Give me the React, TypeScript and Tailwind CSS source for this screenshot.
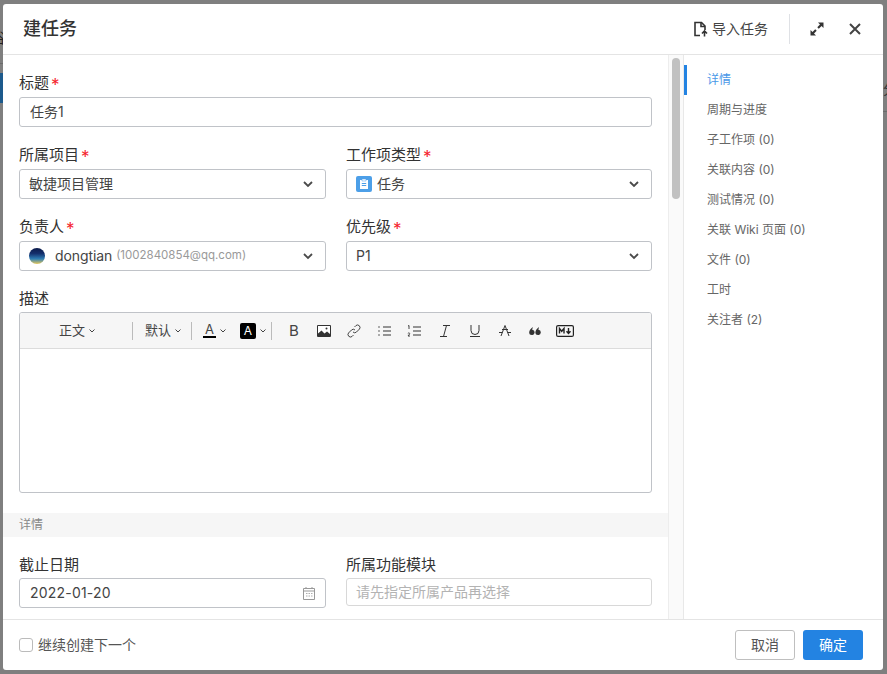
import React from "react";

const font = { fontFamily: 'Inter, "Noto Sans CJK SC", sans-serif' };

function Chevron({ className = "" }: { className?: string }) {
  return (
    <svg viewBox="0 0 10 7" className={"h-[7px] w-[10px] " + className} fill="none" stroke="#4a4a4a" strokeWidth="1.8">
      <path d="M1 1l4 4 4-4" />
    </svg>
  );
}

function Mini() {
  return (
    <svg viewBox="0 0 6 4" className="ml-1 h-1 w-[6px]" fill="none" stroke="#444" strokeWidth="1">
      <path d="M.5.5L3 3 5.500.5" />
    </svg>
  );
}

function Label({ text, req }: { text: string; req?: boolean }) {
  return (
    <div className="flex h-[18px] items-center text-[15px] leading-[18px] text-[#333]">
      {text}
      {req && <span className="ml-[2px] mt-[3px] text-[17px] leading-[18px] text-[#f5222d]">*</span>}
    </div>
  );
}

function Select({ children }: { children: React.ReactNode }) {
  return (
    <div className="mt-[5px] flex h-[30px] items-center justify-between rounded-[3px] border border-[#c0c3c8] bg-white pr-[12px] text-[14px] text-[#444]">
      <div className="flex min-w-0 items-center">{children}</div>
      <Chevron />
    </div>
  );
}

const nav = ["周期与进度", "子工作项 (0)", "关联内容 (0)", "测试情况 (0)", "关联 Wiki 页面 (0)", "文件 (0)", "工时", "关注者 (2)"];

export default function App() {
  return (
    <div className="relative flex h-[674px] w-[887px] overflow-hidden bg-[#7f7f7f] pl-[3px] pt-1" style={font}>
      <div className="absolute left-0 top-[73px] h-[30px] w-[3px] bg-[#1d5a8c]" />
      <div className="absolute left-[-8px] top-[29px] text-[14px] leading-[18px] text-[#222]">谷</div>
      <div className="absolute left-[883px] top-[80px] text-[14px] leading-[18px] text-[#333]">分</div>
      <div className="absolute left-[883px] top-[111px] h-px w-1 bg-[#6b6b6b]" />
      <div className="absolute left-0 top-[63px] h-px w-[3px] bg-[#6b6b6b]" />

      <div className="relative z-10 flex h-[666px] w-[880px] flex-col overflow-hidden rounded-[3px] bg-white">
        <header className="flex h-[51px] shrink-0 items-center justify-between border-b border-[#e4e4e4] pl-[20px] pr-[22px]">
          <h1 className="text-[18px] font-medium leading-[26px] text-[#333]">建任务</h1>
          <div className="flex items-center">
            <svg viewBox="0 0 16 16" className="h-4 w-4" fill="none" stroke="#333" strokeWidth="1.6">
              <path d="M8 14.500H3V1.500h6.500L13 5v4" />
              <path d="M9 1.500V5.500h4" />
              <path d="M12.500 15.500V10.500M10 12.500l2.500-2.500 2.500 2.500" />
            </svg>
            <span className="mb-[2px] ml-[4px] text-[14px] text-[#444]">导入任务</span>
            <div className="ml-[21px] h-[30px] w-px bg-[#dfe1e5]" />
            <svg viewBox="0 0 14 14" className="ml-[20px] h-[14px] w-[14px]" fill="#333" stroke="none">
              <path d="M8 0.500h5.500V6L11.500 4 8.800 6.700 7.300 5.200 10 2.500zM6 13.500H.5V8L2.500 10l2.700-2.700 1.500 1.500L4 11.500z" />
            </svg>
            <svg viewBox="0 0 12 12" className="ml-[25px] h-3 w-3" fill="none" stroke="#444" strokeWidth="2">
              <path d="M1 1l10 10M11 1L1 11" />
            </svg>
          </div>
        </header>

        <div className="flex min-h-0 flex-1">
          <main className="w-[665px] shrink-0 overflow-hidden pt-[19px]">
            <div className="px-[16px]">
              <Label text="标题" req />
              <div className="mt-[5px] flex h-[30px] items-center rounded-[3px] border border-[#c0c3c8] pb-[2px] pl-[10px] text-[14px] text-[#444]">任务1</div>
              <div className="mt-[19px] grid grid-cols-[307px_306px] gap-x-[20px] gap-y-[19px]">
                <div>
                  <Label text="所属项目" req />
                  <Select><span className="mb-[2px] pl-[9px]">敏捷项目管理</span></Select>
                </div>
                <div>
                  <Label text="工作项类型" req />
                  <Select>
                    <span className="ml-[9px] flex h-4 w-4 items-center justify-center rounded-[2px] bg-[#4c9fe8]">
                      <svg viewBox="0 0 12 12" className="h-3 w-3">
                        <path d="M2 2h8v9H2z" fill="#fff" />
                        <path d="M4 1h4v2H4z" fill="#fff" stroke="#4c9fe8" strokeWidth=".5" />
                        <path d="M3.800 5.500h4.400M3.800 7.500h4.400" stroke="#4c9fe8" />
                      </svg>
                    </span>
                    <span className="mb-[2px] ml-[5px]">任务</span>
                  </Select>
                </div>
                <div>
                  <Label text="负责人" req />
                  <Select>
                    <span className="ml-[9px] h-4 w-4 rounded-full bg-[linear-gradient(180deg,#0c1a4a_0%,#14306e_35%,#2f7fb5_68%,#e8c95a_100%)]" />
                    <span className="mb-[1px] ml-[10px] text-[14px] tracking-[-0.1px] text-[#444]">dongtian</span>
                    <span className="mb-[1px] ml-[4px] text-[11.5px] text-[#999]">(1002840854@qq.com)</span>
                  </Select>
                </div>
                <div>
                  <Label text="优先级" req />
                  <Select><span className="mb-[1px] pl-[9px]">P1</span></Select>
                </div>
              </div>

              <div className="mt-[19px]"><Label text="描述" /></div>
              <div className="mt-[4px] h-[181px] overflow-hidden rounded-[3px] border border-[#c0c3c8]">
                <div className="flex h-[36px] items-center border-b border-[#dcdcdc] bg-[#f6f6f6] text-[13px] text-[#444]">
                  <div className="flex w-[112px] items-center justify-center pl-[2px]">正文<Mini /></div>
                  <div className="h-[18px] w-px bg-[#bbb]" />
                  <div className="flex w-[58px] items-center justify-center pl-[2px]">默认<Mini /></div>
                  <div className="h-[18px] w-px bg-[#bbb]" />
                  <div className="flex w-[48px] items-center pl-[11px]">
                    <span className="border-b-2 border-black px-[2px] text-[13px] leading-[13px]">A</span><Mini />
                  </div>
                  <div className="flex items-center">
                    <span className="flex h-4 w-4 items-center justify-center rounded-[2px] bg-black text-[12px] text-white">A</span><Mini />
                  </div>
                  <div className="ml-[5px] h-[18px] w-px bg-[#bbb]" />
                  <span className="ml-[15px] w-[14px] text-center text-[15px] leading-none text-[#444]">B</span>
                  <svg viewBox="0 0 14 12" className="ml-[16px] h-3 w-[14px]">
                    <path d="M.5.500h13v11H.5z" fill="#fff" stroke="#333" />
                    <path d="M1 11V8.500L4.500 5.500l3 3L10 6.500 13 9v2z" fill="#333" />
                    <circle cx="9.500" cy="3.500" r="1" fill="#333" />
                  </svg>
                  <svg viewBox="0 0 14 14" className="ml-[16px] h-[14px] w-[14px]" fill="none" stroke="#444" strokeWidth="1">
                    <path d="M6 8a2.500 2.500 0 0 0 3.500 0l3-3A2.500 2.500 0 0 0 9 1.500L7.500 3" />
                    <path d="M8 6a2.500 2.500 0 0 0-3.500 0l-3 3A2.500 2.500 0 0 0 5 12.500L6.500 11" />
                  </svg>
                  <svg viewBox="0 0 14 12" className="ml-[17px] h-3 w-[14px]" fill="none" stroke="#333">
                    <path d="M5 2h8M5 6h8M5 10h8" />
                    <path d="M1 1.500v1M1 5.500v1M1 9.500v1" strokeWidth="1.500" />
                  </svg>
                  <svg viewBox="0 0 14 12" className="ml-[15px] h-3 w-[14px]" fill="none" stroke="#333">
                    <path d="M6 2h8M6 6h8M6 10h8" />
                    <path d="M1 1l1-.5V4M.8 8.500c1-1 2.200-.5 1.800.5L1 11h2" strokeWidth=".9" />
                  </svg>
                  <svg viewBox="0 0 10 12" className="ml-[19px] h-3 w-[10px]" fill="none" stroke="#333">
                    <path d="M3 .5h7M0 11.500h7" /><path d="M6.500.5l-3 11" />
                  </svg>
                  <svg viewBox="0 0 10 12" className="ml-[20px] h-3 w-[10px]" fill="none" stroke="#333">
                    <path d="M1 0v5.500a4 4 0 0 0 8 0V0M0 11.500h10" />
                  </svg>
                  <svg viewBox="0 0 12 12" className="ml-[19px] h-3 w-3" fill="none" stroke="#333">
                    <path d="M2 11L6 .5 10 11M0 7.500h3.500M8.500 7.500H12M3 4.500h6" />
                  </svg>
                  <svg viewBox="0 0 12 8" className="ml-[18px] h-2 w-3" fill="#333">
                    <path d="M2.800 8A2.600 2.600 0 0 1 .2 5.300C.2 3.500 1.800 1.500 3.800 0L3.200 2.800A2.600 2.600 0 0 1 2.800 8zM9 8a2.600 2.600 0 0 1-2.600-2.700C6.400 3.500 8 1.500 10 0L9.400 2.800A2.600 2.600 0 0 1 9 8z" />
                  </svg>
                  <svg viewBox="0 0 18 12" className="ml-[15px] h-3 w-[18px]" fill="none" stroke="#222">
                    <rect x=".6" y=".6" width="16.800" height="10.800" rx="1.500" strokeWidth="1.200" />
                    <path d="M3.500 8.500V3.500L5.700 6.300 8 3.500v5" strokeWidth="1.400" />
                    <path d="M12.500 3v5M10.500 6.200l2 2.300 2-2.300" strokeWidth="1.400" />
                  </svg>
                </div>
              </div>
            </div>

            <div className="mt-[20px] flex h-[24px] items-center bg-[#f6f6f6] pl-[16px] text-[12px] text-[#888]">详情</div>

            <div className="mt-[19px] grid grid-cols-[307px_306px] gap-x-[20px] px-[16px]">
              <div>
                <Label text="截止日期" />
                <div className="mt-[4px] flex h-[30px] items-center justify-between rounded-[3px] border border-[#c0c3c8] pl-[10px] pr-[9px] text-[14px] text-[#444]">
                  <span className="mb-[1px] tracking-[0.2px]">2022-01-20</span>
                  <svg viewBox="0 0 14 14" className="h-[14px] w-[14px]" fill="none" stroke="#999">
                    <path d="M1.500 2.500h11v11h-11zM1.500 5h11M4 1v2M10 1v2" />
                    <path d="M4 7.500h1.500M6.500 7.500H8M9 7.500h1.500M4 10h1.500M6.500 10H8M9 10h1.500" strokeWidth=".8" />
                  </svg>
                </div>
              </div>
              <div>
                <Label text="所属功能模块" />
                <div className="mt-[4px] flex h-[28px] items-center rounded-[3px] border border-[#d8d8d8] pb-[2px] pl-[9px] text-[14px] text-[#b3b3b3]">请先指定所属产品再选择</div>
              </div>
            </div>
          </main>

          <div className="flex w-[15px] shrink-0 justify-center border-l border-[#ededed] bg-[#fafafa] pt-[3px] pr-[1px]">
            <div className="h-[141px] w-2 rounded-full bg-[#c1c1c1]" />
          </div>

          <nav className="flex-1 border-l border-[#e8e8e8] pt-[10px] text-[12px]">
            <div className="flex h-[30px] items-center border-l-[3px] border-[#2383e2] pl-[20px] text-[#4a98e8]">详情</div>
            {nav.map((n) => (
              <div key={n} className="flex h-[30px] items-center pl-[23px] text-[#666]">{n}</div>
            ))}
          </nav>
        </div>

        <footer className="flex h-[51px] shrink-0 items-center justify-between border-t border-[#e4e4e4] pl-[16px] pr-[20px]">
          <div className="flex items-center text-[14px] text-[#555]">
            <span className="h-[14px] w-[14px] rounded-[3px] border border-[#bbb]" />
            <span className="mb-[2px] ml-[5px]">继续创建下一个</span>
          </div>
          <div className="flex items-center gap-2 text-[14px]">
            <div className="flex h-[30px] w-[60px] items-center justify-center rounded-[3px] border border-[#bfbfbf] pb-[2px] text-[#555]">取消</div>
            <div className="flex h-[30px] w-[60px] items-center justify-center rounded-[3px] bg-[#2383e2] pb-[2px] text-white">确定</div>
          </div>
        </footer>
      </div>
    </div>
  );
}
